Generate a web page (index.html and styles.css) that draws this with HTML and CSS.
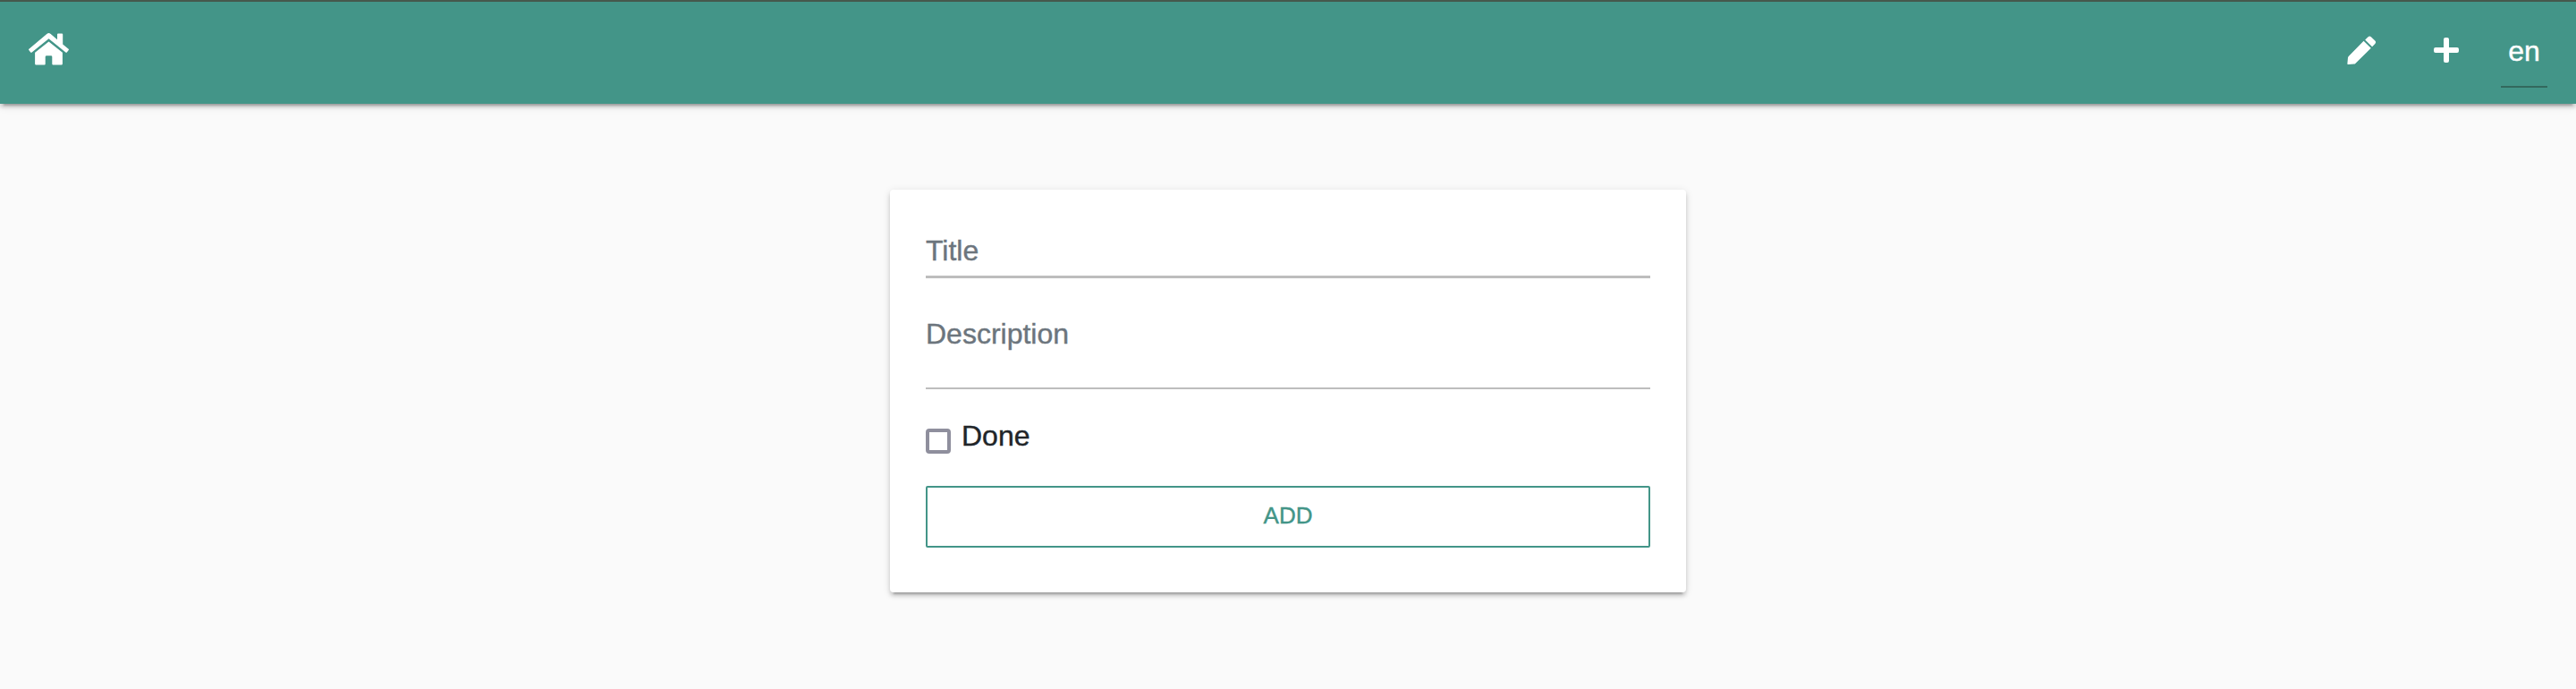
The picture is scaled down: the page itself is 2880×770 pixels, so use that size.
FILE: index.html
```html
<!DOCTYPE html>
<html lang="en">
<head>
<meta charset="utf-8">
<title>Add</title>
<link rel="stylesheet" href="styles.css">
</head>
<body>
<header class="navbar">
  <a class="home" aria-label="Home"><svg width="46" height="36" viewBox="0 0 46 36" fill="#fff"><path d="M20.3 1Q22.5-.8 24.7 1L32 7.2V1.5Q32 .5 33 .5H37.2Q38.2 .5 38.2 1.5V12.5L44.6 17.8Q45.3 18.4 44.7 19.1L42.8 21.4Q42.2 22.2 41.4 21.5L22.5 6.2L3.6 21.5Q2.8 22.2 2.2 21.4L.3 19.1Q-.3 18.4 .4 17.8Z"/><path d="M22.5 9.4L37.9 21.8V34.3Q37.9 35.5 36.7 35.5H27.3Q26.3 35.5 26.3 34.5V26.5Q26.3 25.3 25 25.3H20.1Q18.7 25.3 18.7 26.5V34.5Q18.7 35.5 17.7 35.5H8.3Q7.1 35.5 7.1 34.3V21.8Z"/></svg></a>
  <nav class="actions">
    <svg class="pencil" width="33" height="33" viewBox="0 0 33 33" fill="#fff"><path d="M18.6 5.8L26.8 13.8L9.3 31Q8.8 31.5 8 31.6L1.6 32.1Q.3 32.2.4 30.9L1 24.5Q1.1 23.7 1.7 23.1Z"/><path d="M20.2 4.5L23.6 1.2Q25.2-.4 26.9 1.2L31.3 5.6Q32.9 7.3 31.3 8.9L28.1 12.2Z"/></svg>
    <svg class="plus" width="28" height="28" viewBox="0 0 28 28" fill="#fff"><path d="M11 2Q11 0 13 0H15Q17 0 17 2V11H26Q28 11 28 13V15Q28 17 26 17H17V26Q17 28 15 28H13Q11 28 11 26V17H2Q0 17 0 15V13Q0 11 2 11H11Z"/></svg>
    <span class="language">en</span>
  </nav>
</header>
<main class="content">
  <form class="card">
    <input class="field title" type="text" placeholder="Title">
    <textarea class="field description" placeholder="Description"></textarea>
    <label class="done"><input class="checkbox" type="checkbox"><span>Done</span></label>
    <button class="submit" type="button">ADD</button>
  </form>
</main>
</body>
</html>
```
FILE: styles.css
```css
* {
  box-sizing: border-box;
}

body {
  margin: 0;
  min-height: 770px;
  background: #fafafa;
  color: #212529;
  font: 32px/48px "Liberation Sans", Arial, sans-serif;
  -webkit-text-stroke: .4px currentColor;
}

.navbar,
.card {
  box-shadow: 0 4px 4px rgba(0, 0, 0, .14), 0 6px 2px -4px rgba(0, 0, 0, .2), 0 2px 10px rgba(0, 0, 0, .12);
}

.navbar {
  display: flex;
  justify-content: space-between;
  align-items: flex-start;
  height: 116px;
  padding: 0 32px;
  border-top: 2px solid #46584c;
  background: #439588;
}

.home {
  display: flex;
  padding-top: 35px;
}

.actions {
  display: flex;
  align-items: flex-start;
}

.actions svg {
  display: block;
}

.pencil {
  margin: 38px 63.5px 0 0;
}

.plus {
  margin: 40px 47.5px 0 0;
}

.language {
  width: 52px;
  height: 96px;
  padding-top: 31px;
  border-bottom: 2px solid #33695d;
  color: #fff;
  text-align: center;
}

.content {
  display: flex;
  justify-content: center;
  padding-top: 96px;
}

.card {
  display: flex;
  flex-direction: column;
  width: 890px;
  height: 450px;
  padding: 40px;
  border-radius: 4px;
  background: #fff;
}

.field {
  display: block;
  width: 100%;
  margin: 0;
  padding: 0;
  border: 0;
  border-bottom: 2px solid #bdbdbd;
  border-radius: 0;
  outline: 0;
  background: transparent;
  color: #212529;
  font: inherit;
  resize: none;
  overflow: hidden;
}

.field::placeholder {
  color: #6c757d;
  opacity: 1;
}

.title {
  height: 59px;
  padding-top: 1px;
  border-bottom-width: 3px;
}

.description {
  height: 124px;
  padding-top: 38px;
}

.done {
  display: flex;
  align-items: flex-start;
  height: 108px;
  padding-top: 28px;
}

.done span {
  margin-left: 12px;
}

.checkbox {
  appearance: none;
  width: 28px;
  height: 28px;
  margin: 16px 0 0;
  border: 4px solid #8f8f9d;
  border-radius: 4px;
  background: #fff;
}

.submit {
  height: 69px;
  padding: 0 0 3px;
  border: 2px solid #439588;
  border-radius: 2px;
  background: #fff;
  color: #439588;
  font: 26px/36px "Liberation Sans", Arial, sans-serif;
}
```
